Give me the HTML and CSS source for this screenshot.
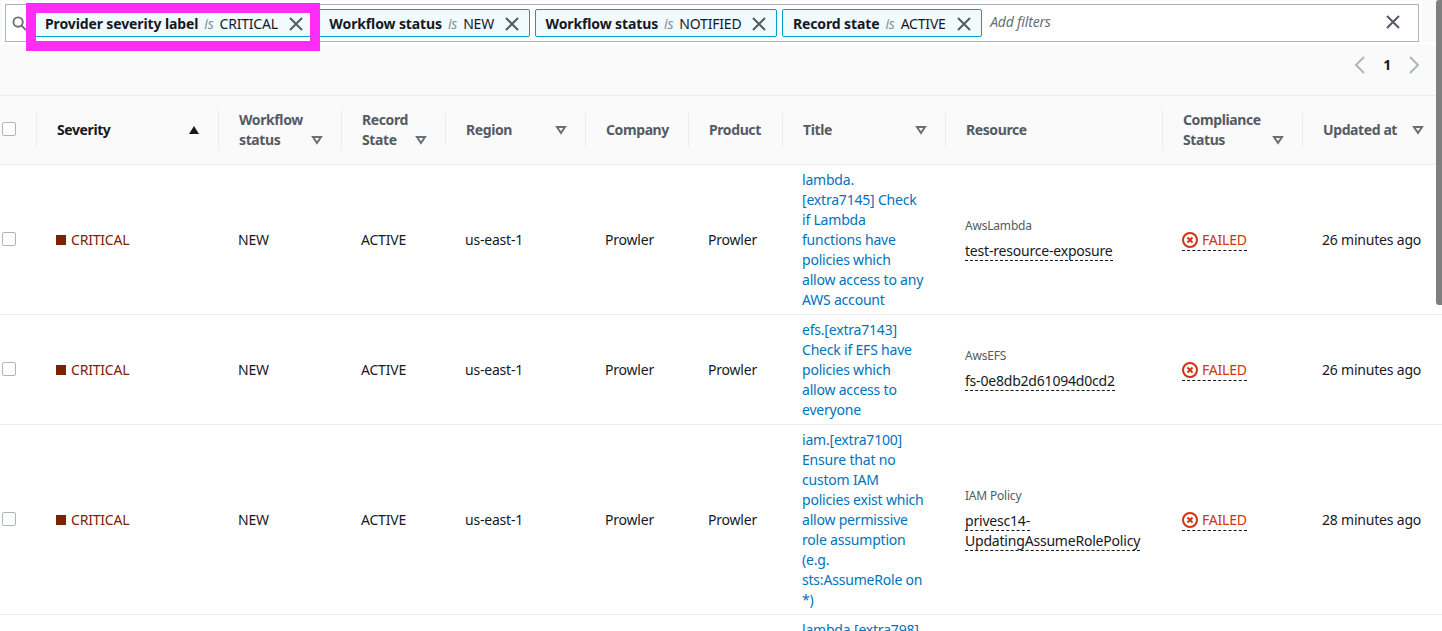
FILE: index.html
```html
<!DOCTYPE html>
<html lang = "en">
	<head>
		<meta charset = "UTF-8">
		<meta content = "width=device-width, initial-scale=1.0" name = "viewport">
		<link rel = "stylesheet" href = "styles.css">
		<title>Findings</title>
	</head>
	<body>
		<div class = "filter-panel">
			<div class = "filter-bar">
				<svg class = "search-icon" viewBox = "0 0 16 16"><circle cx = "6.5" cy = "6.5" r = "5"/><path d = "M10.2 10.2L15 15"/></svg>
				<div class = "token"><span class = "token-name">Provider severity label</span><i>is</i><span>CRITICAL</span><svg class = "close-icon" viewBox = "0 0 14 14"><path d = "M1 1l12 12M13 1L1 13"/></svg></div>
				<div class = "token"><span class = "token-name">Workflow status</span><i>is</i><span>NEW</span><svg class = "close-icon" viewBox = "0 0 14 14"><path d = "M1 1l12 12M13 1L1 13"/></svg></div>
				<div class = "token"><span class = "token-name">Workflow status</span><i>is</i><span>NOTIFIED</span><svg class = "close-icon" viewBox = "0 0 14 14"><path d = "M1 1l12 12M13 1L1 13"/></svg></div>
				<div class = "token"><span class = "token-name">Record state</span><i>is</i><span>ACTIVE</span><svg class = "close-icon" viewBox = "0 0 14 14"><path d = "M1 1l12 12M13 1L1 13"/></svg></div>
				<span class = "add-filters">Add filters</span>
				<svg class = "close-icon clear-all" viewBox = "0 0 14 14"><path d = "M1 1l12 12M13 1L1 13"/></svg>
			</div>
		</div>
		<div class = "highlight"></div>

		<div class = "pagination">
			<svg class = "page-arrow" viewBox = "0 0 12 18"><path d = "M10 1L2 9l8 8"/></svg>
			<span class = "page-number">1</span>
			<svg class = "page-arrow" viewBox = "0 0 12 18"><path d = "M2 1l8 8-8 8"/></svg>
		</div>

		<table class = "findings">
			<colgroup>
				<col class = "col-check">
				<col class = "col-severity">
				<col class = "col-workflow">
				<col class = "col-record">
				<col class = "col-region">
				<col class = "col-company">
				<col class = "col-product">
				<col class = "col-title">
				<col class = "col-resource">
				<col class = "col-compliance">
				<col class = "col-updated">
			</colgroup>
			<thead>
				<tr>
					<th class = "check-cell"><span class = "checkbox"></span></th>
					<th><div class = "th-inner sorted"><span>Severity</span><svg class = "sort-icon" viewBox = "0 0 12 10"><path class = "sort-solid" d = "M1 9L6 1l5 8z"/></svg></div></th>
					<th><div class = "th-inner low"><span>Workflow status</span><svg class = "sort-icon" viewBox = "0 0 12 10"><path d = "M2 2h8L6 8z"/></svg></div></th>
					<th><div class = "th-inner low"><span>Record State</span><svg class = "sort-icon" viewBox = "0 0 12 10"><path d = "M2 2h8L6 8z"/></svg></div></th>
					<th><div class = "th-inner"><span>Region</span><svg class = "sort-icon" viewBox = "0 0 12 10"><path d = "M2 2h8L6 8z"/></svg></div></th>
					<th><div class = "th-inner"><span>Company</span></div></th>
					<th><div class = "th-inner"><span>Product</span></div></th>
					<th><div class = "th-inner"><span>Title</span><svg class = "sort-icon" viewBox = "0 0 12 10"><path d = "M2 2h8L6 8z"/></svg></div></th>
					<th><div class = "th-inner"><span>Resource</span></div></th>
					<th><div class = "th-inner low"><span>Compliance Status</span><svg class = "sort-icon" viewBox = "0 0 12 10"><path d = "M2 2h8L6 8z"/></svg></div></th>
					<th><div class = "th-inner"><span>Updated at</span><svg class = "sort-icon" viewBox = "0 0 12 10"><path d = "M2 2h8L6 8z"/></svg></div></th>
				</tr>
			</thead>
			<tbody>
				<tr>
					<td class = "check-cell"><span class = "checkbox"></span></td>
					<td><span class = "severity"><span class = "severity-box"></span>CRITICAL</span></td>
					<td>NEW</td>
					<td>ACTIVE</td>
					<td>us-east-1</td>
					<td>Prowler</td>
					<td>Prowler</td>
					<td><a class = "title-link" href = "#">lambda.[extra7145] Check if Lambda functions have policies which allow access to any AWS account</a></td>
					<td><div class = "resource-type">AwsLambda</div><span class = "dashed">test-resource-exposure</span></td>
					<td><span class = "failed dashed"><svg class = "failed-icon" viewBox = "0 0 16 16"><circle cx = "8" cy = "8" r = "7"/><path d = "M5.5 5.5l5 5M10.5 5.5l-5 5"/></svg>FAILED</span></td>
					<td>26 minutes ago</td>
				</tr>
				<tr>
					<td class = "check-cell"><span class = "checkbox"></span></td>
					<td><span class = "severity"><span class = "severity-box"></span>CRITICAL</span></td>
					<td>NEW</td>
					<td>ACTIVE</td>
					<td>us-east-1</td>
					<td>Prowler</td>
					<td>Prowler</td>
					<td><a class = "title-link" href = "#">efs.[extra7143] Check if EFS have policies which allow access to everyone</a></td>
					<td><div class = "resource-type">AwsEFS</div><span class = "dashed">fs-0e8db2d61094d0cd2</span></td>
					<td><span class = "failed dashed"><svg class = "failed-icon" viewBox = "0 0 16 16"><circle cx = "8" cy = "8" r = "7"/><path d = "M5.5 5.5l5 5M10.5 5.5l-5 5"/></svg>FAILED</span></td>
					<td>26 minutes ago</td>
				</tr>
				<tr>
					<td class = "check-cell"><span class = "checkbox"></span></td>
					<td><span class = "severity"><span class = "severity-box"></span>CRITICAL</span></td>
					<td>NEW</td>
					<td>ACTIVE</td>
					<td>us-east-1</td>
					<td>Prowler</td>
					<td>Prowler</td>
					<td><a class = "title-link" href = "#">iam.[extra7100] Ensure that no custom IAM policies exist which allow permissive role assumption (e.g. sts:AssumeRole on *)</a></td>
					<td><div class = "resource-type">IAM Policy</div><span class = "dashed">privesc14-UpdatingAssumeRolePolicy</span></td>
					<td><span class = "failed dashed"><svg class = "failed-icon" viewBox = "0 0 16 16"><circle cx = "8" cy = "8" r = "7"/><path d = "M5.5 5.5l5 5M10.5 5.5l-5 5"/></svg>FAILED</span></td>
					<td>28 minutes ago</td>
				</tr>
				<tr>
					<td class = "check-cell"></td>
					<td></td>
					<td></td>
					<td></td>
					<td></td>
					<td></td>
					<td></td>
					<td><a class = "title-link" href = "#">lambda.[extra798]</a></td>
					<td></td>
					<td></td>
					<td></td>
				</tr>
			</tbody>
		</table>

		<div class = "scrollbar"></div>
	</body>
</html>
```

FILE: styles.css
```css
html, body {
    height: 631px;
    overflow: hidden;
}

body {
    margin: 0;
    background-color: #FFF;
    color: #16191F;
    font-family: 'Noto Sans', 'Open Sans', sans-serif;
    font-size: 14px;
    line-height: 20px;
    letter-spacing: -0.2px;
}

svg {
    display: block;
    flex: none;
    fill: none;
}

.filter-panel {
    padding-top: 4px;
    background-color: #FAFAFA;
}

.filter-bar {
    display: flex;
    align-items: center;
    gap: 4.5px;
    box-sizing: border-box;
    width: 1414px;
    height: 38px;
    margin-left: 5px;
    padding: 4px 18px 4px 6px;
    border: 1px solid #AAB7B8;
    background-color: #FFF;
    box-shadow: 0 0 0 3px #FFF;
}

.search-icon {
    width: 15px;
    height: 15px;
    margin-right: 2.5px;
    stroke: #687078;
    stroke-width: 2;
}

.token {
    display: flex;
    align-items: center;
    height: 28px;
    box-sizing: border-box;
    padding: 2px 10px 0;
    border: 1px solid #00A1C9;
    border-radius: 2px;
    background-color: #F1FAFF;
    white-space: nowrap;
}

.token-name {
    font-weight: 700;
    letter-spacing: -0.12px;
}

.token i {
    margin: 0 6px;
    color: #879596;
}

.close-icon {
    width: 14px;
    height: 14px;
    stroke: #545B64;
    stroke-width: 2;
}

.token .close-icon {
    margin-left: 11px;
}

.add-filters {
    margin-left: 4px;
    margin-top: -2px;
    color: #687078;
    font-style: italic;
}

.clear-all {
    margin-left: auto;
    margin-top: -2px;
}

.highlight {
    position: absolute;
    left: 26px;
    top: 3px;
    width: 274px;
    height: 28px;
    border: 10px solid #FF2CF5;
}

.pagination {
    display: flex;
    align-items: center;
    justify-content: flex-end;
    height: 51px;
    margin-top: 3px;
    padding-right: 22px;
    gap: 17px;
    box-sizing: border-box;
    background-color: #FAFAFA;
    border-bottom: 1px solid #EAEDED;
    padding-bottom: 10px;
}

.page-arrow {
    width: 12px;
    height: 18px;
    stroke: #AAB7B8;
    stroke-width: 2;
}

.page-number {
    font-weight: 700;
}

.findings {
    table-layout: fixed;
    border-collapse: separate;
    border-spacing: 0;
    width: 1442px;
}

.col-check { width: 36px; }
.col-severity { width: 182px; }
.col-workflow { width: 123px; }
.col-record { width: 104px; }
.col-region { width: 140px; }
.col-company { width: 103px; }
.col-product { width: 94px; }
.col-title { width: 163px; }
.col-resource { width: 217px; }
.col-compliance { width: 140px; }
.col-updated { width: 140px; }

th {
    height: 69px;
    padding: 0;
    box-sizing: border-box;
    background-color: #FAFAFA;
    border-bottom: 1px solid #EAEDED;
    color: #545B64;
    font-weight: 700;
    text-align: left;
    letter-spacing: -0.4px;
}

.th-inner {
    display: flex;
    align-items: center;
    justify-content: space-between;
    gap: 6px;
    box-sizing: border-box;
    min-height: 34px;
    padding: 0 18px 0 20px;
    border-left: 1px solid #EAEDED;
}

.th-inner.low {
    align-items: flex-end;
}

.th-inner.low .sort-icon {
    margin-bottom: 5px;
}

.th-inner.sorted {
    color: #16191F;
}

.sort-icon {
    width: 12px;
    height: 10px;
    stroke: #687078;
    stroke-width: 2;
}

.sort-solid {
    fill: #16191F;
    stroke: none;
}

td {
    padding: 5px 12px 4px 20px;
    border-bottom: 1px solid #EAEDED;
    vertical-align: middle;
}

th.check-cell, td.check-cell {
    padding: 0 0 2px 2px;
}

.checkbox {
    display: block;
    box-sizing: border-box;
    width: 14px;
    height: 14px;
    border: 1px solid #AAB7B8;
    border-radius: 2px;
    background-color: #FFF;
}

.severity {
    display: flex;
    align-items: center;
    gap: 5px;
    color: #7D2105;
}

.severity-box {
    width: 10px;
    height: 10px;
    background-color: #7D2105;
}

.title-link {
    display: block;
    width: 124px;
    color: #0073BB;
    text-decoration: none;
}

.resource-type {
    margin-top: -2px;
    margin-bottom: 7px;
    color: #545B64;
    font-size: 12px;
    line-height: 16px;
}

.dashed {
    border-bottom: 1px dashed #16191F;
}

.failed {
    display: inline-flex;
    align-items: center;
    gap: 4px;
    margin-top: 2px;
    color: #D13212;
}

.failed-icon {
    width: 16px;
    height: 16px;
    stroke: #D13212;
    stroke-width: 2;
}

.scrollbar {
    position: absolute;
    top: 0;
    right: 0;
    width: 6px;
    height: 305px;
    border-radius: 3px 0 0 3px;
    background-color: #7F7F7F;
}
```
